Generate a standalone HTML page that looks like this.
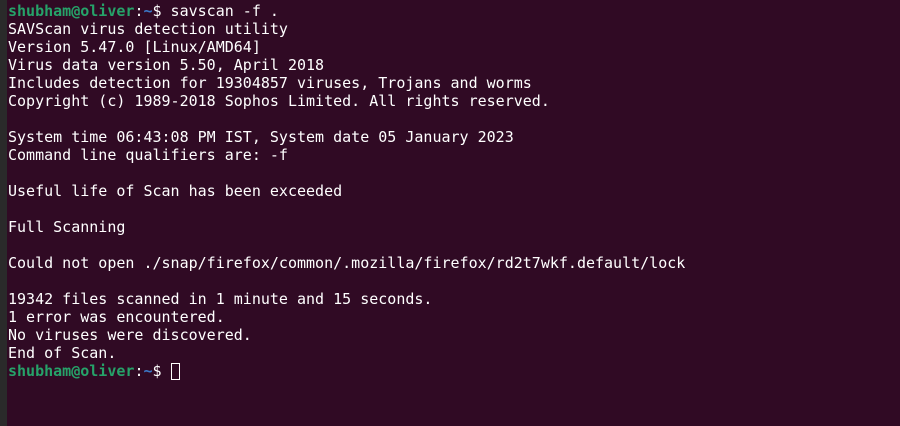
<!DOCTYPE html>
<html><head><style>
html,body{margin:0;padding:0;}
body{width:900px;height:426px;background:#300a24;overflow:hidden;position:relative;}
.strip{position:absolute;left:0;top:0;width:7px;height:426px;background:#2a2a2a;}
pre{position:absolute;left:8px;top:2px;margin:0;font-family:"DejaVu Sans Mono","Liberation Mono",monospace;font-size:15px;line-height:18px;color:#ffffff;letter-spacing:0;}
.g{color:#26a269;font-weight:bold;}
.b{color:#3b78c8;font-weight:bold;}
.cur{display:inline-block;width:9px;height:17px;border:1px solid #fff;vertical-align:-4px;box-sizing:border-box;}
</style></head><body>
<div class="strip"></div>
<pre><span class="g">shubham@oliver</span>:<span class="b">~</span>$ savscan -f .
SAVScan virus detection utility
Version 5.47.0 [Linux/AMD64]
Virus data version 5.50, April 2018
Includes detection for 19304857 viruses, Trojans and worms
Copyright (c) 1989-2018 Sophos Limited. All rights reserved.

System time 06:43:08 PM IST, System date 05 January 2023
Command line qualifiers are: -f

Useful life of Scan has been exceeded

Full Scanning

Could not open ./snap/firefox/common/.mozilla/firefox/rd2t7wkf.default/lock

19342 files scanned in 1 minute and 15 seconds.
1 error was encountered.
No viruses were discovered.
End of Scan.
<span class="g">shubham@oliver</span>:<span class="b">~</span>$ <span class="cur"></span></pre>
</body></html>
